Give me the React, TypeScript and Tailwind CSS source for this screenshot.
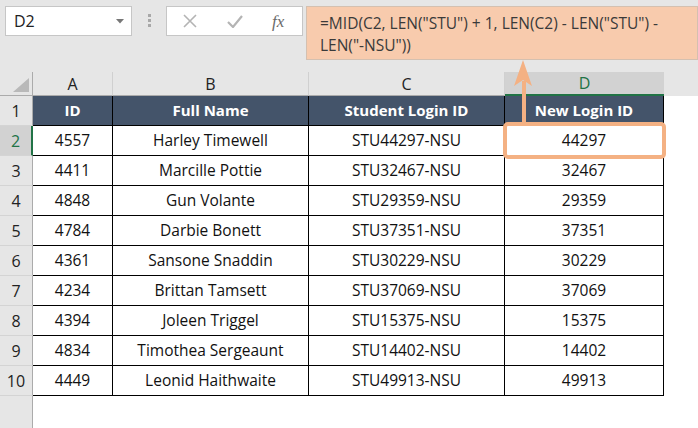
import React from "react";

const rows = [
  ["4557", "Harley Timewell", "STU44297-NSU", "44297"],
  ["4411", "Marcille Pottie", "STU32467-NSU", "32467"],
  ["4848", "Gun Volante", "STU29359-NSU", "29359"],
  ["4784", "Darbie Bonett", "STU37351-NSU", "37351"],
  ["4361", "Sansone Snaddin", "STU30229-NSU", "30229"],
  ["4234", "Brittan Tamsett", "STU37069-NSU", "37069"],
  ["4394", "Joleen Triggel", "STU15375-NSU", "15375"],
  ["4834", "Timothea Sergeaunt", "STU14402-NSU", "14402"],
  ["4449", "Leonid Haithwaite", "STU49913-NSU", "49913"],
];

const widths = ["w-[80px]", "w-[196px]", "w-[196px]", "w-[159px]"];

export default function App() {
  return (
    <div
      className="relative w-[698px] h-[428px] overflow-hidden bg-white flex flex-col"
      style={{ fontFamily: '"Open Sans", "Noto Sans", sans-serif' }}
    >
      {/* Toolbar */}
      <div className="h-[72px] shrink-0 bg-[#E6E6E6] flex items-start pt-[6px] pl-[5px]">
        <div className="w-[127px] h-[30px] bg-white border border-[#C6C6C6] flex items-center justify-between pl-[8px] pr-[7px]">
          <span className="text-[16px] text-[#222]">D2</span>
          <svg width="8" height="5" viewBox="0 0 8 5">
            <path d="M0 0 L8 0 L4 4.5 Z" fill="#777" />
          </svg>
        </div>
        <div className="ml-[16px] mt-[8px] flex flex-col gap-[2px]">
          <div className="w-[3px] h-[3px] bg-[#A8A8A8]" />
          <div className="w-[3px] h-[3px] bg-[#A8A8A8]" />
          <div className="w-[3px] h-[3px] bg-[#A8A8A8]" />
        </div>
        <div className="ml-[15px] w-[137px] h-[30px] bg-white border border-[#C6C6C6] flex items-center">
          <svg className="ml-[16px]" width="14" height="14" viewBox="0 0 14 14">
            <path d="M1 1 L13 13 M13 1 L1 13" stroke="#B4B4B4" strokeWidth="1.6" />
          </svg>
          <svg className="ml-[30px]" width="16" height="13" viewBox="0 0 16 13">
            <path d="M1 7 L6 12 L15 1" stroke="#B4B4B4" strokeWidth="2.2" fill="none" />
          </svg>
          <span
            className="ml-[29px] text-[17px] italic text-[#6A6A6A] leading-none"
            style={{ fontFamily: '"Liberation Serif", "DejaVu Serif", serif' }}
          >
            fx
          </span>
        </div>
        <div className="ml-[3px] flex-1 h-[54px] bg-[#F8CBAD] border border-[#D4C0B0] pt-[5px] pl-[13px] pr-[4px]">
          <div className="text-[15.5px] leading-[22px] text-[#3A3A3A] whitespace-nowrap">
            =MID(C2, LEN("STU") + 1, LEN(C2) - LEN("STU") -
            <br />
            LEN("-NSU"))
          </div>
        </div>
      </div>

      {/* Column headers */}
      <div className="h-[24px] shrink-0 flex bg-[#E6E6E6]">
        <div className="w-[33px] h-full border-r border-b border-[#ABABAB] flex items-end justify-end pr-[3px] pb-[3px]">
          <svg width="16" height="14" viewBox="0 0 16 14">
            <path d="M0 14 L16 14 L16 0 Z" fill="#B9B9B9" />
          </svg>
        </div>
        {["A", "B", "C"].map((c, i) => (
          <div
            key={c}
            className={`${widths[i]} h-full border-r border-r-[#D0D0D0] border-b border-b-[#ABABAB] flex items-center justify-center text-[16px] text-[#222]`}
          >
            {c}
          </div>
        ))}
        <div className="w-[159px] h-full bg-[#D2D2D2] border-b-2 border-[#217346] flex items-center justify-center text-[16px] text-[#217346]">
          D
        </div>
        <div className="flex-1" />
      </div>

      {/* Header row 1 */}
      <div className="h-[30px] shrink-0 flex">
        <div className="w-[33px] h-full bg-[#E6E6E6] border-r border-[#ABABAB] border-b border-b-[#D4D4D4] flex items-center justify-center text-[16px] text-[#222]">
          1
        </div>
        {["ID", "Full Name", "Student Login ID", "New Login ID"].map((h, i) => (
          <div
            key={h}
            className={`${widths[i]} h-full bg-[#44546A] border-r border-b border-black flex items-center justify-center text-[15px] font-bold text-white`}
          >
            {h}
          </div>
        ))}
      </div>

      {/* Data rows */}
      {rows.map((r, ri) => {
        const selected = ri === 0;
        return (
          <div key={ri} className="h-[30px] shrink-0 flex">
            <div
              className={`w-[33px] h-full border-b border-b-[#D4D4D4] flex items-center justify-center text-[16px] ${
                selected
                  ? "bg-[#D2D2D2] border-r-2 border-r-[#217346] text-[#217346]"
                  : "bg-[#E6E6E6] border-r border-r-[#ABABAB] text-[#222]"
              }`}
            >
              {ri + 2}
            </div>
            {r.map((v, i) => (
              <div
                key={i}
                className={`${widths[i]} h-full border-r border-b border-black flex items-center justify-center pt-[1px] text-[15.5px] text-[#111]`}
              >
                {v}
              </div>
            ))}
          </div>
        );
      })}

      {/* Rest */}
      <div className="flex-1 flex">
        <div className="w-[33px] h-full bg-[#E6E6E6] border-r border-[#ABABAB]" />
        <div className="flex-1" />
      </div>

      {/* Highlight box */}
      <div className="absolute left-[503px] top-[122px] w-[163px] h-[37px] border-[4px] border-[#F4B183] rounded-[5px]" />
      {/* Arrow */}
      <svg className="absolute left-[512px] top-[59px]" width="22" height="65" viewBox="0 0 22 65">
        <path d="M10 22 L10 65 L14 65 L14 22 Z" fill="#F4B183" />
        <path d="M11 1 L20 27 L11 21 L2 27 Z" fill="#F4B183" />
      </svg>
    </div>
  );
}
